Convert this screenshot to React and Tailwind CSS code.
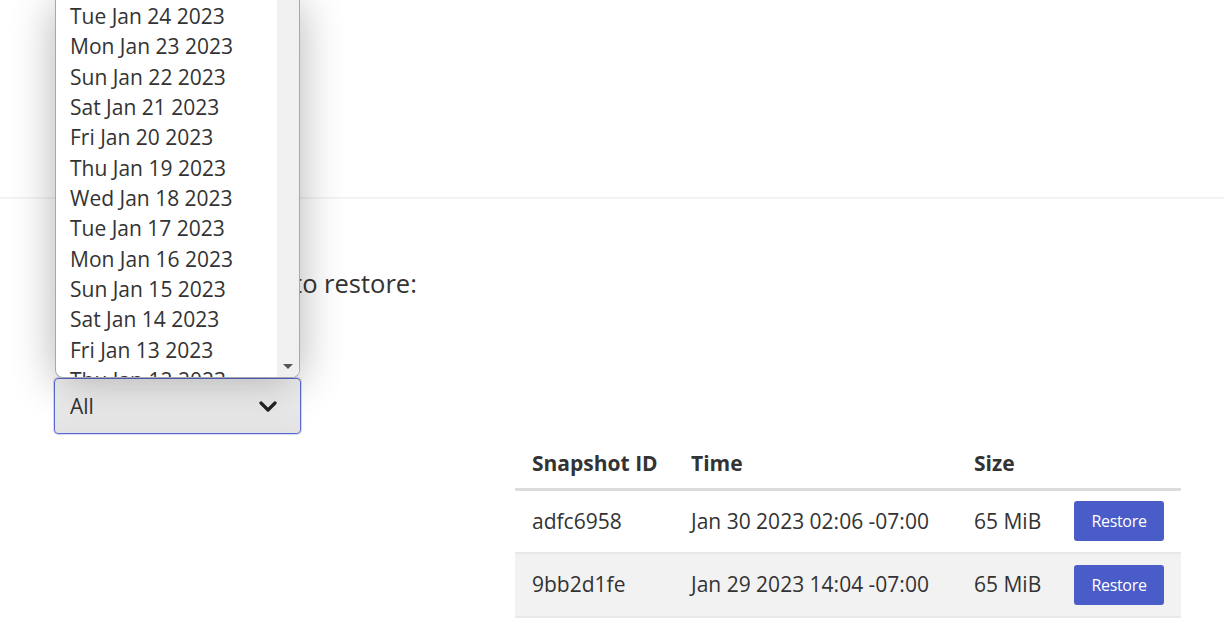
import React from 'react';

const dates = [
  'Tue Jan 24 2023',
  'Mon Jan 23 2023',
  'Sun Jan 22 2023',
  'Sat Jan 21 2023',
  'Fri Jan 20 2023',
  'Thu Jan 19 2023',
  'Wed Jan 18 2023',
  'Tue Jan 17 2023',
  'Mon Jan 16 2023',
  'Sun Jan 15 2023',
  'Sat Jan 14 2023',
  'Fri Jan 13 2023',
  'Thu Jan 12 2023',
];

const snapshots = [
  { id: 'adfc6958', time: 'Jan 30 2023 02:06 -07:00', size: '65 MiB' },
  { id: '9bb2d1fe', time: 'Jan 29 2023 14:04 -07:00', size: '65 MiB' },
];

const Chevron = () => (
  <svg width="18" height="12" viewBox="0 0 18 12" fill="none">
    <polyline points="2,2 9,9 16,2" stroke="#222" strokeWidth="3.2" strokeLinecap="round" strokeLinejoin="round" />
  </svg>
);

const DatePopup = () => (
  <div className="absolute left-[55px] top-0 w-[245px] h-[378px] flex bg-white border border-t-0 border-[#a8a8a8] rounded-b-[8px] overflow-hidden shadow-[0_4px_44px_rgba(0,0,0,0.3)] z-10">
    <ul className="flex-1 pt-[1px]">
      {dates.map((d) => (
        <li key={d} className="h-[30.33px] leading-[30.33px] pl-[14px] text-[21px] text-[#333] whitespace-nowrap">
          {d}
        </li>
      ))}
    </ul>
    <div className="w-[22px] bg-[#f0f0f0] flex flex-col justify-end items-center pb-[8px]">
      <div className="w-0 h-0 border-l-[5px] border-r-[5px] border-t-[5px] border-l-transparent border-r-transparent border-t-[#555]" />
    </div>
  </div>
);

const SnapshotTable = () => (
  <table className="w-[666px] border-collapse text-[21px] text-[#333]">
    <thead>
      <tr className="h-[50px] border-b-[3px] border-[#dcdcdc]">
        <th className="w-[159px] pl-[17px] text-left font-bold">Snapshot ID</th>
        <th className="w-[283px] pl-[17px] text-left font-bold">Time</th>
        <th className="w-[100px] pl-[17px] text-left font-bold">Size</th>
        <th />
      </tr>
    </thead>
    <tbody>
      {snapshots.map((s, i) => (
        <tr key={s.id} className={`h-[64px] border-b-[2px] border-[#e8e8e8] ${i % 2 === 1 ? 'bg-[#f2f2f2]' : 'bg-white'}`}>
          <td className="pl-[17px]">{s.id}</td>
          <td className="pl-[17px]">{s.time}</td>
          <td className="pl-[17px]">{s.size}</td>
          <td className="pl-[17px]">
            <button className="w-[90px] h-[40px] rounded-[3px] bg-[#4a5cc8] text-white text-[16px] tracking-[-0.3px]">
              Restore
            </button>
          </td>
        </tr>
      ))}
    </tbody>
  </table>
);

export default function App() {
  return (
    <div
      className="relative w-full h-[627px] overflow-hidden bg-white text-[#333]"
      style={{ fontFamily: '"Open Sans", "Noto Sans", sans-serif' }}
    >
      <div className="h-[197px] px-[55px] pt-[94px]">
        <h2 className="text-[24px]">Select backup</h2>
      </div>
      <div className="h-[2px] bg-[#f3f3f3]" />
      <div className="px-[54px] pt-[68px]">
        <p className="text-[25.5px] leading-[32px]">Select the snapshot to restore:</p>
        <p className="mt-[42px] text-[20px] leading-[28px]">Date</p>
        <div className="mt-[9px] flex">
          <div className="w-[247px] h-[56px] flex items-center justify-between pl-[15px] pr-[23px] pt-[2px] border border-[#5b69d3] rounded-[4px] bg-gradient-to-b from-[#f5f5f5] to-[#e2e2e2] shadow-[0_0_0_1px_rgba(91,105,211,0.25)] text-[21px]">
            <span>All</span>
            <Chevron />
          </div>
        </div>
        <div className="flex justify-end mr-[-11px] mt-[5px]">
          <SnapshotTable />
        </div>
      </div>
      <DatePopup />
    </div>
  );
}
